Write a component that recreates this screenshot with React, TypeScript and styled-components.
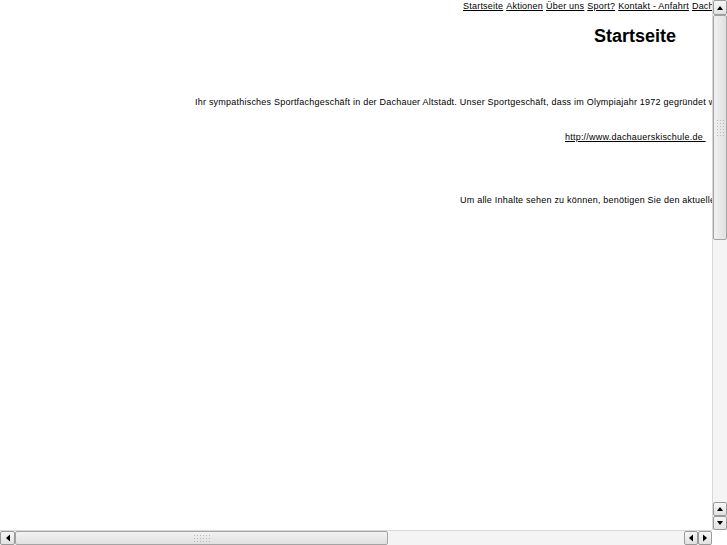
import React from 'react'
import styled, { createGlobalStyle } from 'styled-components'

const GlobalStyle = createGlobalStyle`
  html, body {
    margin: 0;
    padding: 0;
    background: #ffffff;
    overflow: hidden;
  }
`

const Frame = styled.div`
  width: 727px;
  height: 545px;
  display: grid;
  grid-template-columns: 712px 15px;
  grid-template-rows: 530px 15px;
  font-family: 'Liberation Sans', Arial, sans-serif;
  color: #000;
`

const Viewport = styled.div`
  overflow: hidden;
  background: #fff;
`

const Line = styled.div<{ $indent: number; $top: number }>`
  margin-top: ${({ $top }) => $top}px;
  padding-left: ${({ $indent }) => $indent}px;
  white-space: nowrap;
  font-size: 9px;
  line-height: 12px;
  letter-spacing: 0.22px;
`

const NavLink = styled.a`
  color: #000;
  text-decoration: underline;
  margin-right: 3px;
`

const Heading = styled.h1<{ $indent: number; $top: number }>`
  margin: ${({ $top }) => $top}px 0 0;
  padding-left: ${({ $indent }) => $indent}px;
  font-size: 18px;
  line-height: 21px;
  font-weight: bold;
  white-space: nowrap;
`

const TextLink = styled.a`
  color: #000;
  text-decoration: underline;
  white-space: pre;
`

const VScroll = styled.div`
  grid-row: 1;
  grid-column: 2;
  display: flex;
  flex-direction: column;
  background: #f4f4f4;
  background-image: radial-gradient(#e2e2e2 0.6px, transparent 0.7px);
  background-size: 2px 2px;
  border-left: 1px solid #d8d8d8;
`

const HScroll = styled.div`
  grid-row: 2;
  grid-column: 1;
  display: flex;
  flex-direction: row;
  background: #f4f4f4;
  background-image: radial-gradient(#e2e2e2 0.6px, transparent 0.7px);
  background-size: 2px 2px;
  border-top: 1px solid #d8d8d8;
`

const Corner = styled.div`
  grid-row: 2;
  grid-column: 2;
  background: #fff;
`

const ArrowButton = styled.div<{ $size: number }>`
  flex: 0 0 ${({ $size }) => $size}px;
  box-sizing: border-box;
  border: 1px solid #9a9a9a;
  border-radius: 2px;
  background: linear-gradient(#f6f6f6, #e2e2e2);
  display: flex;
  align-items: center;
  justify-content: center;
`

const Thumb = styled.div<{ $vertical?: boolean; $length: number }>`
  flex: 0 0 ${({ $length }) => $length}px;
  box-sizing: border-box;
  border: 1px solid #a4a4a4;
  border-radius: 2px;
  background: ${({ $vertical }) =>
    $vertical ? 'linear-gradient(90deg, #f2f2f2, #e0e0e0)' : 'linear-gradient(#f2f2f2, #e0e0e0)'};
  display: flex;
  align-items: center;
  justify-content: center;
`

const Grip = styled.div<{ $w: number; $h: number }>`
  width: ${({ $w }) => $w}px;
  height: ${({ $h }) => $h}px;
  background-image: radial-gradient(#b8b8b8 0.7px, transparent 0.9px);
  background-size: 3px 3px;
`

const Spacer = styled.div`
  flex: 1;
`

type Dir = 'up' | 'down' | 'left' | 'right'

const tri: Record<Dir, string> = {
  up: '1,5 4,1 7,5',
  down: '1,1 4,5 7,1',
  left: '5,0.5 1,4 5,7.5',
  right: '1,0.5 5,4 1,7.5',
}

const Arrow: React.FC<{ dir: Dir; size?: number }> = ({ dir, size = 15 }) => {
  const vertical = dir === 'up' || dir === 'down'
  return (
    <ArrowButton $size={size}>
      <svg width={vertical ? 8 : 6} height={vertical ? 6 : 8} viewBox={vertical ? '0 0 8 6' : '0 0 6 8'}>
        <polygon points={tri[dir]} fill="#000" />
      </svg>
    </ArrowButton>
  )
}

const navItems = ['Startseite', 'Aktionen', 'Über uns', 'Sport?', 'Kontakt - Anfahrt', 'Dachauer Skischule']

export default function App() {
  return (
    <>
      <GlobalStyle />
      <Frame>
        <Viewport>
          <Line $indent={463} $top={0}>
            {navItems.map((item) => (
              <NavLink key={item} href="#">
                {item}
              </NavLink>
            ))}
          </Line>
          <Heading $indent={594} $top={14}>
            Startseite
          </Heading>
          <Line $indent={195} $top={49}>
            Ihr sympathisches Sportfachgeschäft in der Dachauer Altstadt. Unser Sportgeschäft, dass im
            Olympiajahr 1972 gegründet wurde, bietet Ihnen alles rund um den Sport.
          </Line>
          <Line $indent={565} $top={23}>
            <TextLink href="#">http://www.dachauerskischule.de </TextLink>
          </Line>
          <Line $indent={460} $top={51}>
            Um alle Inhalte sehen zu können, benötigen Sie den aktuellen Flash Player.
          </Line>
        </Viewport>
        <VScroll>
          <Arrow dir="up" />
          <Thumb $vertical $length={225}>
            <Grip $w={9} $h={18} />
          </Thumb>
          <Spacer />
          <Arrow dir="up" size={14} />
          <Arrow dir="down" size={14} />
        </VScroll>
        <HScroll>
          <Arrow dir="left" />
          <Thumb $length={373}>
            <Grip $w={18} $h={9} />
          </Thumb>
          <Spacer />
          <Arrow dir="left" size={14} />
          <Arrow dir="right" size={14} />
        </HScroll>
        <Corner />
      </Frame>
    </>
  )
}
